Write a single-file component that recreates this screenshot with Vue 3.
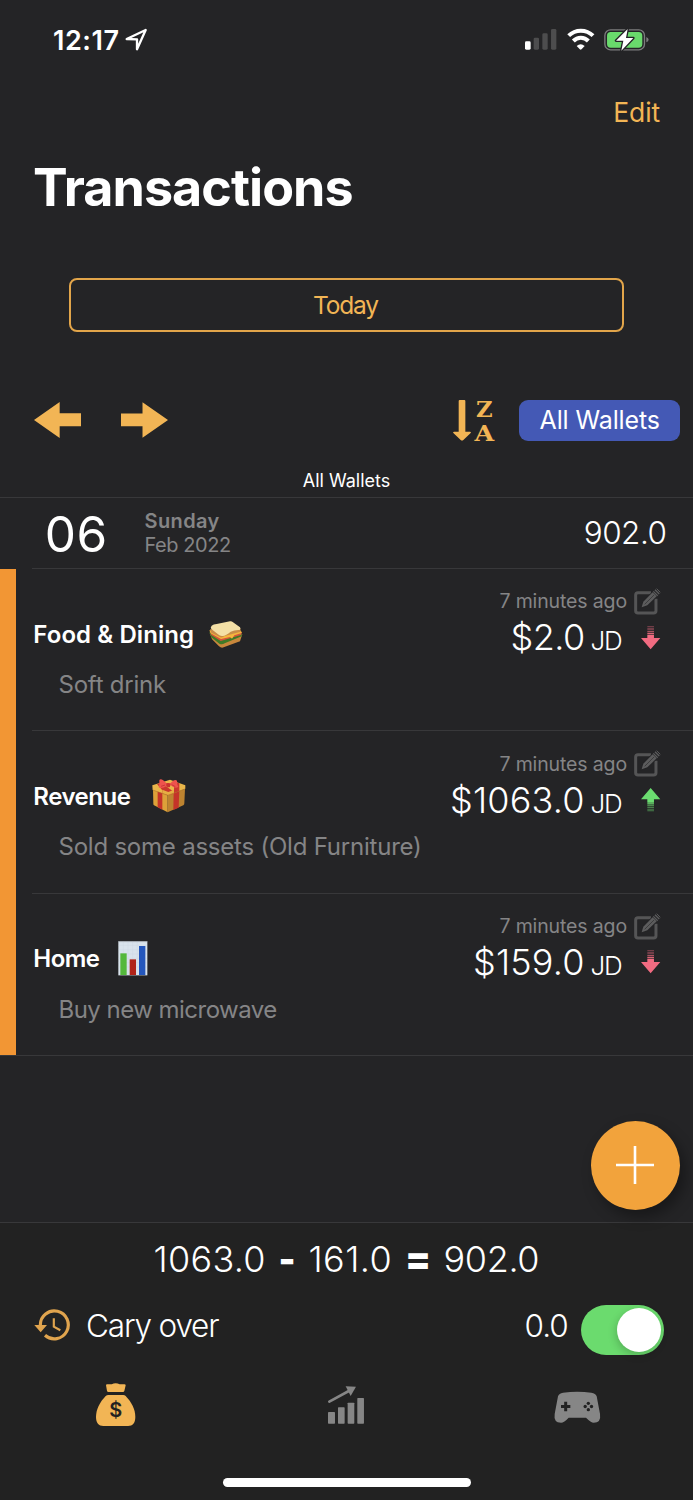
<script setup>
import { ref } from 'vue'

const carryOver = ref(true)
const transactions = [
  { id: 1, name: 'Food & Dining', icon: 'sandwich', note: 'Soft drink', age: '7 minutes ago', amount: '$2.0', unit: 'JD', kind: 'expense' },
  { id: 2, name: 'Revenue', icon: 'gift', note: 'Sold some assets (Old Furniture)', age: '7 minutes ago', amount: '$1063.0', unit: 'JD', kind: 'income' },
  { id: 3, name: 'Home', icon: 'chart', note: 'Buy new microwave', age: '7 minutes ago', amount: '$159.0', unit: 'JD', kind: 'expense' },
]
</script>

<template>
  <div class="screen">
    <header class="status">
      <span class="clock">12:17</span>
      <svg class="location" viewBox="376 84 68 70"><path d="M438 90 412 148V118L381 117Z" fill="none" stroke="#fff" stroke-width="7" stroke-linejoin="round" /></svg>
      <svg class="signal" viewBox="135 87 95 62">
        <rect x="135" y="124" width="17" height="25" rx="4" fill="#fff" />
        <g fill="#4d4d4e"><rect x="161" y="113" width="16" height="36" rx="4" /><rect x="187" y="100" width="16" height="49" rx="4" /><rect x="213" y="87" width="16" height="62" rx="4" /></g>
      </svg>
      <svg class="wifi" viewBox="260 86 83 63">
        <g fill="none" stroke="#fff" stroke-width="12"><path d="M265 106A52 52 0 0 1 338 106" /><path d="M279 122A31 31 0 0 1 324 122" /></g>
        <path d="M289 137Q301 127 313 137L303.500 147Q301 149 298.500 147Z" fill="#fff" />
      </svg>
      <svg class="battery" viewBox="372 83 135 70">
        <rect x="374.500" y="88.500" width="119" height="60" rx="17" fill="none" stroke="#7c7c7e" stroke-width="4" />
        <rect x="381" y="95" width="106" height="47" rx="11" fill="#69da6c" />
        <path d="M499 110Q506 113 506 118T499 126Z" fill="#7c7c7e" />
        <path d="M443 86 408 121H430L424 151 460 113H438Z" fill="#fff" stroke="#242426" stroke-width="8" stroke-linejoin="round" paint-order="stroke" />
      </svg>
    </header>

    <nav class="nav"><span class="edit">Edit</span></nav>
    <h1 class="title">Transactions</h1>
    <button class="today">Today</button>

    <div class="toolbar">
      <svg class="arrow" viewBox="103 65 141 108"><path d="M103 119 180 65V99H244V138H180V173Z" fill="#f2b555" /></svg>
      <svg class="arrow" viewBox="364 65 142 108"><path d="M506 119 429 65V99H364V138H429V173Z" fill="#f2b555" /></svg>
      <svg class="sort" viewBox="69 56 125 127">
        <g fill="#f2b555">
          <path d="M86 62Q86 59 89 59H103Q106 59 106 62V154H120Q125 155 122 158L100 179Q96 182 92 179L70 158Q67 155 72 154H86Z" />
          <text class="slab" x="138" y="110" textLength="50" lengthAdjust="spacingAndGlyphs">Z</text>
          <text class="slab" x="133.500" y="181" textLength="59" lengthAdjust="spacingAndGlyphs">A</text>
        </g>
      </svg>
      <button class="wallets">All Wallets</button>
    </div>
    <div class="wallet-name">All Wallets</div>

    <section class="day">
      <span class="day-num">06</span>
      <div class="day-text"><strong>Sunday</strong><span>Feb 2022</span></div>
      <span class="day-total">902.0</span>
    </section>

    <section class="list">
      <div class="stripe"></div>
      <ul class="rows">
        <li v-for="t in transactions" :key="t.id" class="row">
          <div class="info">
            <div class="name">
              <span :class="t.icon + '-name'">{{ t.name }}</span>
              <svg v-if="t.icon === 'sandwich'" class="sandwich" viewBox="627 121 101 81">
                <path d="M629 157 636 176 657 197Q664 203 671 200L720 182 727 160Z" fill="#c8873c" />
                <path d="M628 155 634 170 658 189Q666 193 674 188L725 167 726 160 690 140Z" fill="#3f7a27" />
                <path d="M629 151 634 163 662 181 723 163 726 155 690 140Z" fill="#d6553c" />
                <path d="M628 149 632 158 663 175 690 169 696 174 703 164 725 157 723 150Z" fill="#f5b63c" />
                <path d="M630 146 634 156 661 170Q668 171 674 166L722 153 721 143Z" fill="#c98d48" />
                <path d="M635 135Q640 130 650 130L690 122Q695 121 699 125L720 140Q723 144 719 148 704 147 692 153 678 165 668 166 660 167 654 161L634 145Q630 140 635 135Z" fill="#f4e0a6" />
              </svg>
              <svg v-else-if="t.icon === 'gift'" class="gift" viewBox="457 88 102 102">
                <path d="M460 117 504 133V188L463 167Q461 165 461 162Z" fill="#dda139" />
                <path d="M504 133 556 117 554 161Q554 165 551 167L504 188Z" fill="#bd8330" />
                <path d="M474 122 488 127V180L474 173ZM522 127 539 122 537 174 521 181Z" fill="#c53329" />
                <path d="M458 107 511 90 557 107V117L507 137 459 121Z" fill="#eab64a" />
                <path d="M472 103 485 99 522 126V132L507 137 488 131V122ZM524 96 539 101 539 125 523 131V120Z" fill="#c9372d" />
                <path d="M488 120 506 127 523 120V131L507 137 488 131Z" fill="#e6ae43" />
                <path d="M500 101Q485 84 479 91 480 103 477 113 487 118 501 109L507 113 513 107Q525 118 536 112 531 102 532 93 525 86 512 101Z" fill="#ee534d" />
                <path d="M500 101Q506 98 512 102L511 112Q505 114 500 110Z" fill="#c9332f" />
                <path d="M484 110 496 106M516 105 527 111" stroke="#b72d2c" stroke-width="2" />
                <path d="M459 121 504 137 556 118" fill="none" stroke="#a36d25" stroke-width="1.500" />
              </svg>
              <svg v-else class="chart" viewBox="353 575 89 104">
                <rect x="354" y="576" width="87" height="102" fill="#d9e3ec" />
                <path d="M355 588H440M355 601H440M355 614H440M355 627H440M355 640H440M355 653H440M369 577V677M383 577V677M397 577V677M411 577V677" stroke="#cbd6e1" stroke-width="1" />
                <path d="M354 577H441" stroke="#aab0b8" stroke-width="2" />
                <rect x="360" y="612" width="19" height="65" fill="#54b83b" />
                <rect x="388" y="630" width="19" height="47" fill="#b02318" />
                <rect x="416" y="590" width="19" height="87" fill="#2457bd" />
              </svg>
            </div>
            <div class="note" :class="t.icon + '-note'">{{ t.note }}</div>
          </div>
          <div class="value">
            <div class="age">
              <span>{{ t.age }}</span>
              <svg class="compose" viewBox="612 53 79 80">
                <path d="M663 67H624Q617 67 617 74V121Q617 128 624 128H671Q678 128 678 121V85" fill="none" stroke="#555556" stroke-width="9" />
                <path d="M635 111 640 94 668 66 680 78 652 105Z" fill="#5c5c5d" stroke="#242426" stroke-width="5" paint-order="stroke" />
                <path d="M644 102 672 74" stroke="#353536" stroke-width="2.500" />
                <path d="M670 63 683 76M675 58 688 71" stroke="#5c5c5d" stroke-width="4" />
                <path d="M680 55 691 66" stroke="#5c5c5d" stroke-width="3" />
              </svg>
            </div>
            <div class="money">
              <span class="amount" :class="t.icon + '-amount'">{{ t.amount }}</span>
              <span class="unit">{{ t.unit }}</span>
              <svg class="trend" :class="t.kind" viewBox="633 165 58 70">
                <path d="M633 201H652V191H672V201H691L662 235Z" />
                <path d="M652 185.500H672V189.500H652Z" opacity=".9" />
                <path d="M652 180H672V183.500H652Z" opacity=".65" />
                <path d="M652 175H672V178H652ZM652 170H672V173H652ZM652 165.500H672V168H652Z" opacity=".5" />
              </svg>
            </div>
          </div>
        </li>
      </ul>
    </section>

    <button class="add" aria-label="Add">
      <svg viewBox="0 0 38 38"><path d="M19 0V38M0 19H38" stroke="#fff" stroke-width="2.600" /></svg>
    </button>

    <footer class="panel">
      <div class="sum">
        <span class="in">1063.0</span><b class="minus">-</b><span class="out">161.0</span><b class="equals">=</b><span class="net">902.0</span>
      </div>
      <div class="carry">
        <svg class="history" viewBox="103 267 109 97">
          <path d="M122 315A42 42 0 1 1 136 346" fill="none" stroke="#e0a44e" stroke-width="9.500" />
          <path d="M104 315H142L123 337Z" fill="#e0a44e" />
          <path d="M162.500 295V320L182 331" fill="none" stroke="#e0a44e" stroke-width="6.500" />
        </svg>
        <span class="carry-label">Cary over</span>
        <span class="carry-value">0.0</span>
        <button class="toggle" :class="{ on: carryOver }" aria-label="Carry over" @click="carryOver = !carryOver"><i></i></button>
      </div>
      <div class="tabs">
        <svg class="tab-bag" viewBox="288 488 119 130">
          <path d="M318 495Q318 492 321 492H335Q347 486 359 492H373Q377 492 377 495L373 512Q372 515 369 515H325Q322 515 321 512Z" fill="#f2b555" />
          <path d="M325 524H370Q374 524 377 527C395 546 406 567 406 590 406 608 398 617 384 617H310C296 617 288 608 288 590 288 567 299 546 317 527Q320 524 325 524Z" fill="#f2b555" />
          <text class="dollar" x="347" y="591" text-anchor="middle">$</text>
        </svg>
        <svg class="tab-stats" viewBox="984 498 109 114">
          <g fill="#868686"><rect x="984" y="576" width="21" height="35" rx="2" /><rect x="1014" y="562" width="20" height="49" rx="2" /><rect x="1043" y="548" width="20" height="63" rx="2" /><rect x="1072" y="534" width="20" height="77" rx="2" /><path d="M1037 498.500 1068 500 1052 528Z" /></g>
          <path d="M988 545 1052 510" stroke="#868686" stroke-width="8" stroke-linecap="round" />
        </svg>
        <svg class="tab-game" viewBox="632 511 140 96">
          <path d="M644 527Q647 518 659 516 702 510 744 516 757 518 760 527L770 580Q774 606 751 606 743 606 728 591H676Q662 606 653 606 630 606 634 580Z" fill="#868686" />
          <path d="M667 543V572M653 557.500H681" stroke="#222" stroke-width="9" />
          <g fill="#222"><circle cx="735" cy="548" r="5" /><circle cx="735" cy="567" r="5" /><circle cx="725.500" cy="557.500" r="5" /><circle cx="744.500" cy="557.500" r="5" /></g>
        </svg>
      </div>
      <div class="home-bar"></div>
    </footer>
  </div>
</template>

<style>
html, body { background: #242426; }
</style>

<style scoped>
* { box-sizing: border-box; }
.screen { position: relative; display: flex; flex-direction: column; width: 693px; height: 1500px; overflow: hidden; background: #242426; color: #fff; font-family: Inter, "Liberation Sans", sans-serif; white-space: nowrap; }
svg { display: block; flex: none; overflow: visible; }
button { border: 0; padding: 0; margin: 0; font-family: inherit; color: inherit; }

.status { display: flex; align-items: center; height: 79.500px; flex: none; padding-left: 53px; }
.clock { width: 72.400px; padding-top: 1px; font-size: 27px; font-weight: 600; letter-spacing: .56px; }
.location { width: 22.700px; height: 23.300px; }
.signal { width: 31.700px; height: 20.700px; margin-left: 377px; }
.wifi { width: 27.700px; height: 21px; margin-left: 10px; }
.battery { width: 45px; height: 23.300px; margin-left: 9.500px; }

.nav { height: 65px; flex: none; display: flex; align-items: center; padding-left: 613.300px; }
.edit { font-size: 26.500px; letter-spacing: -.12px; color: #f2b555; }
.title { margin: 0; padding-left: 33px; height: 86px; line-height: 86px; flex: none; font-size: 52px; font-weight: 700; letter-spacing: -.96px; }
.today { flex: none; width: 555px; height: 54px; margin: 47.500px 0 0 69px; padding-right: 2px; border: 2px solid #e2a54a; border-radius: 8px; background: transparent; color: #f2b555; font-size: 24.500px; letter-spacing: -1.200px; line-height: 50px; }

.toolbar { display: flex; align-items: center; flex: none; height: 41px; margin-top: 67.500px; padding-left: 34.300px; }
.arrow { width: 47px; height: 36px; }
.arrow + .arrow { margin-left: 40px; }
.sort { width: 41.700px; height: 42.300px; margin-left: 284.300px; }
.slab { font: bold 69px "DejaVu Serif", serif; }
.wallets { width: 160.500px; height: 41px; margin-left: 25.200px; border-radius: 9px; background: #4459b5; font-size: 25px; letter-spacing: -.11px; line-height: 40px; }
.wallet-name { flex: none; height: 34px; line-height: 35px; margin-top: 22.500px; text-align: center; font-size: 18px; }

.day { display: flex; flex: none; height: 71px; border-top: 1px solid #38383a; }
.day-num { width: 144.500px; padding-left: 44.800px; line-height: 73px; font-size: 49.500px; letter-spacing: .6px; }
.day-text { display: flex; flex-direction: column; width: 200px; padding-top: 11.200px; color: #858586; font-size: 20px; line-height: 24px; }
.day-text strong { font-weight: 600; letter-spacing: .38px; }
.day-text span { letter-spacing: -.44px; }
.day-total { margin-left: 239.200px; line-height: 70px; font-size: 31.500px; font-weight: 300; letter-spacing: -.5px; }

.list { display: flex; flex: none; height: 488px; border-bottom: 1px solid #38383a; }
.stripe { width: 16.300px; margin-top: 1px; background: #f29634; }
.rows { flex: 1; margin: 0 0 0 15.700px; padding: 0; list-style: none; }
.row { display: flex; justify-content: space-between; height: 162.400px; border-top: 1px solid #38383a; padding: 0 33px 0 1.300px; }
.info { padding-top: 45px; }
.name { display: flex; align-items: center; height: 40px; font-size: 24px; font-weight: 600; }
.sandwich-name { letter-spacing: .08px; }
.gift-name { letter-spacing: -.48px; }
.chart-name { letter-spacing: -.54px; }
.sandwich { width: 33.700px; height: 27px; margin-left: 14.700px; }
.gift { width: 34px; height: 34px; margin-left: 22px; }
.chart { width: 29.700px; height: 34.700px; margin-left: 18.300px; }
.note { padding-left: 25.200px; margin-top: 11px; line-height: 40px; font-size: 24px; color: #858586; letter-spacing: -.22px; }
.chart-note { letter-spacing: -.52px; }
.value { display: flex; flex-direction: column; align-items: flex-end; padding-top: 18.200px; }
.age { display: flex; align-items: center; height: 28px; gap: 6.700px; color: #858586; font-size: 19.500px; letter-spacing: -.13px; }
.compose { width: 26.300px; height: 26.700px; }
.money { display: flex; align-items: baseline; height: 44px; line-height: 44px; font-weight: 300; }
.amount { font-size: 36px; letter-spacing: .2px; }
.sandwich-amount { letter-spacing: -.53px; }
.unit { width: 56px; padding-left: 5.700px; font-size: 26px; letter-spacing: -1.100px; }
.trend { width: 19.300px; height: 23.300px; align-self: center; }
.expense { fill: #f16b81; }
.income { fill: #6bdc70; transform: scaleY(-1); }

.add { position: absolute; left: 590.700px; top: 1120.500px; z-index: 2; display: grid; place-items: center; width: 89px; height: 89px; border-radius: 50%; background: #f2a33c; box-shadow: 5px 7px 14px rgba(0, 0, 0, .35); }
.add svg { width: 38px; height: 38px; margin: -1px 0 0 -1px; }

.panel { display: flex; flex-direction: column; height: 278px; margin-top: auto; flex: none; background: #222; border-top: 1px solid #38383a; }
.sum { display: flex; height: 72px; line-height: 72px; padding-left: 153.500px; font-size: 36px; font-weight: 300; }
.in { width: 113px; letter-spacing: .3px; }
.minus { width: 41px; text-align: center; font-size: 36px; font-weight: 900; line-height: 73px; }
.out { width: 85px; margin-left: 1px; letter-spacing: .45px; }
.equals { width: 49px; text-align: center; font-size: 37px; font-weight: 900; line-height: 72px; }
.net { margin-left: 1px; letter-spacing: -.35px; }
.carry { display: flex; align-items: center; height: 60px; padding-left: 34.300px; font-size: 31.500px; font-weight: 300; }
.history { width: 36.300px; height: 32.300px; }
.carry-label { width: 438.300px; margin-left: 15.500px; letter-spacing: -1.200px; }
.carry-value { width: 56.600px; letter-spacing: -.9px; }
.toggle { display: flex; justify-content: flex-start; width: 83px; height: 50.500px; padding: 3px; margin-top: 10px; border-radius: 26px; background: #555; }
.toggle.on { justify-content: flex-end; background: #6bdb6e; }
.toggle i { width: 44px; height: 44px; border-radius: 50%; background: #fff; box-shadow: -1px 3px 9px rgba(0, 0, 0, .2); }
.tabs { display: flex; align-items: center; height: 100px; padding-left: 96px; }
.tab-bag { width: 39.700px; height: 43.300px; }
.dollar { font: 600 60px Inter, sans-serif; fill: #222; }
.tab-stats { width: 36.300px; height: 38px; margin-left: 192.300px; }
.tab-game { width: 46.700px; height: 32px; margin-left: 189.400px; margin-top: 3px; }
.home-bar { width: 248px; height: 9px; margin: 23px 0 0 223px; border-radius: 5px; background: #fff; }
</style>
